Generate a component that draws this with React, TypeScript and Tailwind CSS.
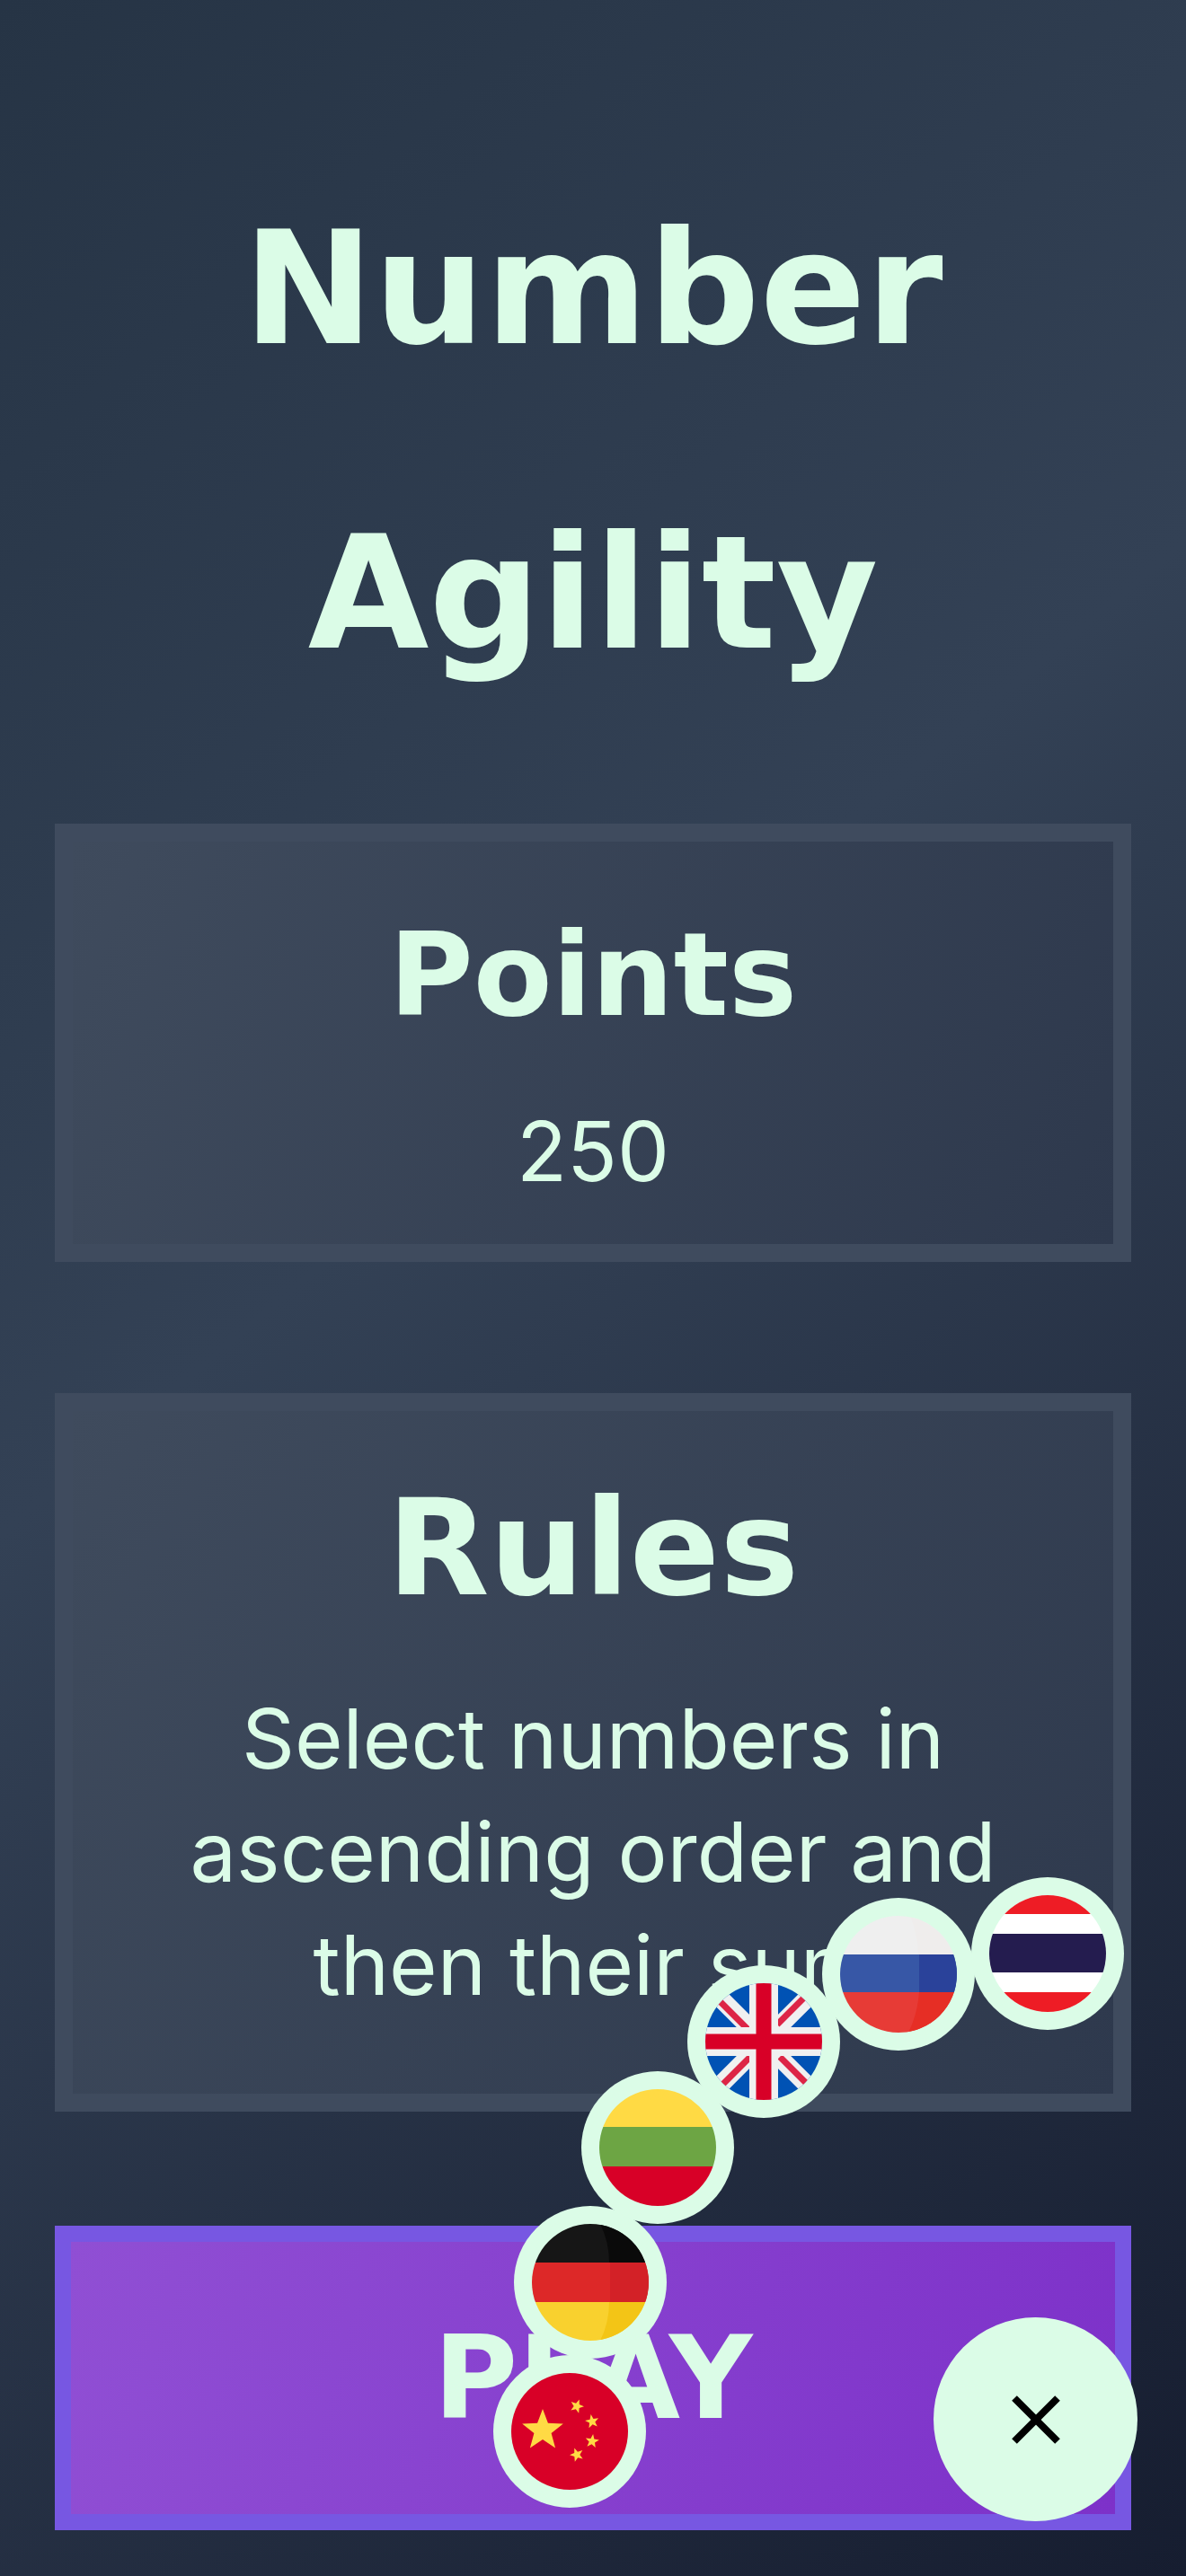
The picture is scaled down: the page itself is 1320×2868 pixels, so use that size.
import { ReactNode } from "react";
import { X } from "lucide-react";

/* Five-pointed star outline, as an SVG points list. */
function star(cx: number, cy: number, r: number, turn = 0) {
  return Array.from({ length: 10 }, (_, i) => {
    const radius = i % 2 ? r * 0.42 : r;
    const a = ((i * 36 - 90 + turn) * Math.PI) / 180;
    return `${cx + radius * Math.cos(a)},${cy + radius * Math.sin(a)}`;
  }).join(" ");
}

function China() {
  return (
    <>
      <rect width="130" height="130" fill="#d80027" />
      <g fill="#ffda44">
        <polygon points={star(35, 64, 24)} />
        <polygon points={star(73, 37, 8, 20)} />
        <polygon points={star(90, 54, 8, -10)} />
        <polygon points={star(90, 76, 8, 8)} />
        <polygon points={star(73, 91, 8, -20)} />
      </g>
    </>
  );
}

function Germany() {
  return (
    <>
      <rect width="130" height="43" fill="#161616" />
      <rect y="43" width="130" height="44" fill="#dd2828" />
      <rect y="87" width="130" height="43" fill="#f9d12e" />
      <path d="M76 0Q86 20 86 43H130V0Z" fill="#0a0a0a" />
      <rect x="87" y="43" width="43" height="44" fill="#d32127" />
      <path d="M86 87Q86 110 76 130H130V87Z" fill="#f3c516" />
    </>
  );
}

function Lithuania() {
  return (
    <>
      <rect width="130" height="42" fill="#ffda44" />
      <rect y="42" width="130" height="44" fill="#6da544" />
      <rect y="86" width="130" height="44" fill="#d80027" />
    </>
  );
}

function UnitedKingdom() {
  return (
    <>
      <rect width="130" height="130" fill="#0052b4" />
      <path d="M0 0L130 130M130 0L0 130" stroke="#f0f0f0" strokeWidth="20" />
      <path
        d="M12 16L48 52M83 82L118 117M112 14L80 46M50 82L16 116"
        stroke="#dd2546"
        strokeWidth="7"
      />
      <path d="M65 0V130M0 65H130" stroke="#f0f0f0" strokeWidth="32" />
      <path d="M65 0V130M0 65H130" stroke="#d80027" strokeWidth="17" />
    </>
  );
}

function Russia() {
  return (
    <>
      <rect width="130" height="43" fill="#efefef" />
      <rect y="43" width="130" height="42" fill="#3757a6" />
      <rect y="85" width="130" height="45" fill="#e73b36" />
      <path d="M78 0Q86 20 87 43H130V0Z" fill="#efedec" />
      <rect x="88" y="43" width="42" height="42" fill="#2a429a" />
      <path d="M88 85Q86 110 76 130H130V85Z" fill="#e62e25" />
    </>
  );
}

function Thailand() {
  return (
    <>
      <rect width="130" height="130" fill="#fff" />
      <rect width="130" height="21" fill="#ee1c25" />
      <rect y="43" width="130" height="43" fill="#241c4f" />
      <rect y="108" width="130" height="22" fill="#ee1c25" />
    </>
  );
}

const LANGUAGES: { name: string; flag: ReactNode }[] = [
  { name: "Chinese", flag: <China /> },
  { name: "German", flag: <Germany /> },
  { name: "Lithuanian", flag: <Lithuania /> },
  { name: "English", flag: <UnitedKingdom /> },
  { name: "Russian", flag: <Russia /> },
  { name: "Thai", flag: <Thailand /> },
];

const ARC_RADIUS = 519;
const ARC_START = -1.4;
const ARC_STEP = 18.56;

function LanguageMenu() {
  return (
    <div className="absolute right-[54px] bottom-[61px] flex size-[227px] items-center justify-center">
      {LANGUAGES.map(({ name, flag }, i) => {
        const a = ((ARC_START + ARC_STEP * i) * Math.PI) / 180;
        const dx = Math.round(-ARC_RADIUS * Math.cos(a));
        const dy = Math.round(-ARC_RADIUS * Math.sin(a));
        return (
          <button
            key={name}
            type="button"
            aria-label={name}
            className="absolute size-[170px] rounded-full bg-green-100 p-5"
            style={{ transform: `translate(${dx}px, ${dy}px)` }}
          >
            <svg viewBox="0 0 130 130" className="block size-full rounded-full" aria-hidden="true">
              {flag}
            </svg>
          </button>
        );
      })}
      <button
        type="button"
        aria-label="Close language menu"
        className="relative flex size-full items-center justify-center rounded-full bg-green-100 text-black"
      >
        <X size={96} strokeWidth={2} strokeLinecap="butt" aria-hidden="true" />
      </button>
    </div>
  );
}

export default function App() {
  return (
    <main className="relative flex min-h-screen flex-col bg-[linear-gradient(140deg,#263445_0%,#334155_43%,#161d30_100%)] px-[61px] pt-[152px] pb-[51px] text-center font-['Inter',sans-serif] text-green-100">
      <h1 className="font-['DejaVu_Sans',sans-serif] text-[174px] leading-[339px] font-bold">
        Number Agility
      </h1>

      <section className="mt-[87px] border-20 border-[#3f4b5e] bg-[linear-gradient(112deg,#3f4b5d,#2e394d)] px-10 pt-16 pb-10">
        <h2 className="font-['DejaVu_Sans',sans-serif] text-[128px] leading-[170px] font-bold">Points</h2>
        <p className="mt-12 text-[92px] leading-[126px]">250</p>
      </section>

      <section className="mt-[146px] border-20 border-[#3f4b5e] bg-[linear-gradient(124deg,#3f4b5d,#2e394d)] px-10 pt-[68px] pb-20">
        <h2 className="font-['DejaVu_Sans',sans-serif] text-[148px] leading-[170px] font-bold">Rules</h2>
        <p className="mt-16 text-[92px] leading-[126px]">
          Select numbers in ascending order and then their sum
        </p>
      </section>

      <button
        type="button"
        className="mt-[127px] h-[339px] border-18 border-[#7757e2] bg-[linear-gradient(106deg,#904fd4,#7d31c9)] font-['DejaVu_Sans',sans-serif] text-[128px] font-bold"
      >
        PLAY
      </button>

      <LanguageMenu />
    </main>
  );
}
